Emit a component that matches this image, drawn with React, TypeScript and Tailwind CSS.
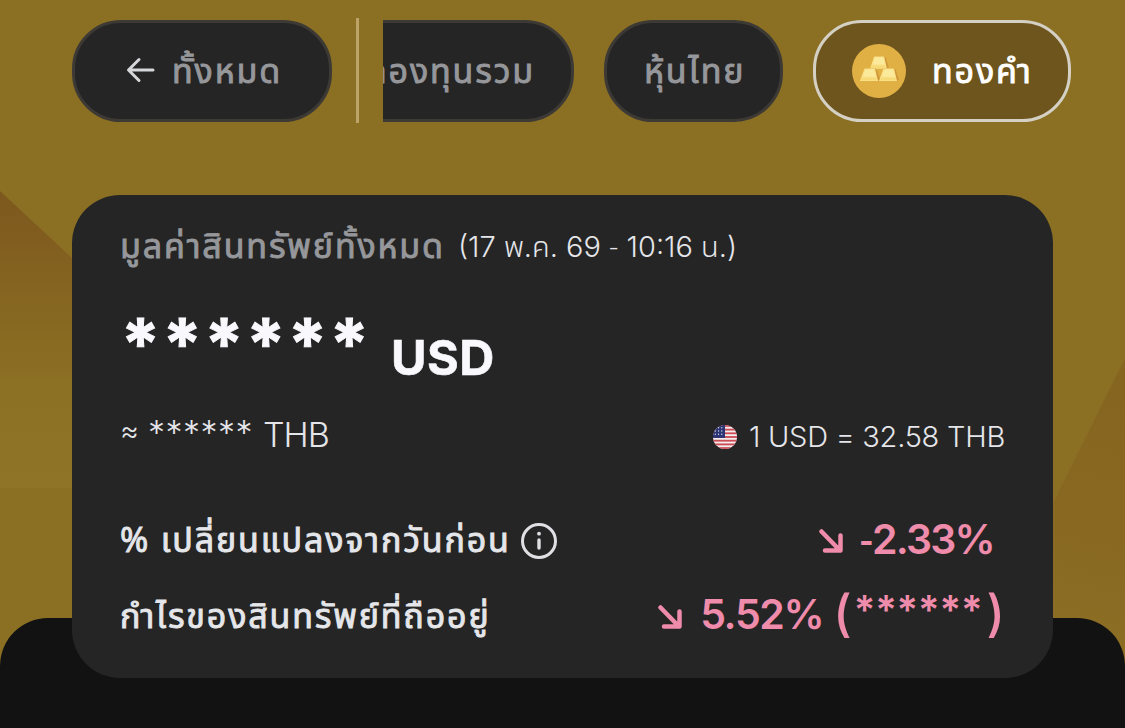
import React from "react";

const thai = "font-['Noto_Sans','Noto_Sans_Thai','Inter',sans-serif]";
const latin = "font-['Inter','Noto_Sans','Noto_Sans_Thai',sans-serif]";
const label = "whitespace-nowrap tracking-[1.85px] [-webkit-text-stroke:0.9px_currentColor]";

function BackArrow() {
  return (
    <svg className="h-[26px] w-[30px] shrink-0" viewBox="0 0 30 26" fill="none" stroke="#d6d7da" strokeWidth="3" strokeLinecap="round" strokeLinejoin="round">
      <path d="M27 13H3M13 2.500 2.500 13 13 23.500" />
    </svg>
  );
}

function DownArrow() {
  return (
    <svg className="h-6 w-6 shrink-0" viewBox="0 0 24 24" fill="none" stroke="#ef8bab" strokeWidth="4.500" strokeLinecap="round" strokeLinejoin="round">
      <path d="M2.500 2.500 21 21.500M21.500 6.500v15H6" />
    </svg>
  );
}

function InfoIcon() {
  return (
    <svg className="h-9 w-9 shrink-0" viewBox="0 0 36 36" fill="none" stroke="#e0e0e4">
      <circle cx="18" cy="18" r="16.500" strokeWidth="3" />
      <circle cx="18" cy="10.700" r="1.900" fill="#e0e0e4" stroke="none" />
      <path d="M18 17v8" strokeWidth="3.400" strokeLinecap="round" />
    </svg>
  );
}

function Ingot() {
  return (
    <>
      <path d="M4.500 0H15l1.800 1.200L20 11l-2.500 1.500H5z" fill="#cf9738" />
      <path d="M4.500 0H15l3 12.500H0z" fill="#fbe38c" />
      <path d="M5.500 1.200h8.500l1.400 6.800H3.500z" fill="#fbea9c" />
      <path d="M2 9h14.200l.8 2.800H.8z" fill="#f7da78" />
    </>
  );
}

function GoldIcon() {
  return (
    <svg className="h-[54px] w-[54px] shrink-0" viewBox="0 0 54 54">
      <circle cx="27" cy="27" r="27" fill="#e1b044" />
      <g transform="translate(18 12.500) scale(.94 .97)"><Ingot /></g>
      <g transform="translate(8 24.500)"><Ingot /></g>
      <g transform="translate(27 24.500)"><Ingot /></g>
    </svg>
  );
}

function Flag() {
  const stripes = [0, 2, 4, 6, 8, 10, 12];
  return (
    <svg className="h-6 w-6 shrink-0" viewBox="0 0 26 26">
      <defs><clipPath id="flag"><circle cx="13" cy="13" r="13" /></clipPath></defs>
      <g clipPath="url(#flag)">
        <rect width="26" height="26" fill="#f3eeee" />
        {stripes.map((i) => <rect key={i} y={i * 2} width="26" height="2" fill="#cc4b55" />)}
        <rect width="13" height="14" fill="#2b3474" />
        {[3, 6.5, 10].map((y) => [2.5, 6, 9.5].map((x) => <circle key={`${x}-${y}`} cx={x} cy={y} r=".7" fill="#d9dbea" />))}
      </g>
    </svg>
  );
}

const pill = "flex h-[102px] shrink-0 items-center rounded-[49px] border-[3px] border-[#3d3a35] bg-[#252525] text-[#96979b]";

export default function App() {
  return (
    <div className={`relative flex h-[728px] w-[1125px] flex-col overflow-hidden bg-[#8b7024] ${thai}`}>
      <svg className="absolute inset-0 h-full w-full" viewBox="0 0 1125 728">
        <defs>
          <linearGradient id="left" x1="0" y1="192" x2="0" y2="488" gradientUnits="userSpaceOnUse">
            <stop offset="0" stopColor="#7d581e" />
            <stop offset=".65" stopColor="#8c7023" />
            <stop offset="1" stopColor="#8f7427" />
          </linearGradient>
          <linearGradient id="right" x1="1125" y1="400" x2="1060" y2="618" gradientUnits="userSpaceOnUse">
            <stop offset="0" stopColor="#866520" />
            <stop offset=".6" stopColor="#896922" />
            <stop offset="1" stopColor="#8b6d24" />
          </linearGradient>
        </defs>
        <path d="M0 191 72 258 160 340V488H0Z" fill="url(#left)" />
        <path d="M1125 358 1053 503V728H1125Z" fill="url(#right)" />
      </svg>

      <header className="relative flex h-[195px] items-start pt-[18px] pl-[72px] text-[34px]">
        <div className={`${pill} mt-[2px] w-[260px] pb-[2px] pl-[51px]`}>
          <BackArrow />
          <span className={`${label} ml-[16px]`}>ทั้งหมด</span>
        </div>
        <div className="ml-6 h-[105px] w-[3px] shrink-0 bg-[#bca468]" />
        <div className="ml-6 flex w-[742px] gap-[30px] overflow-hidden pt-[2px]">
          <div className="flex w-[191px] shrink-0 justify-end overflow-hidden">
            <div className={`${pill} w-[260px] justify-end pr-[36px] pb-[2px]`}>
              <span className={label}>กองทุนรวม</span>
            </div>
          </div>
          <div className={`${pill} w-[179px] pb-[2px] pl-[37px]`}>
            <span className={label}>หุ้นไทย</span>
          </div>
          <div className="flex h-[102px] w-[258px] shrink-0 items-center rounded-[49px] border-[3px] border-[#d5d0c4] bg-[#6e551e] pb-px pl-9 text-white">
            <GoldIcon />
            <span className={`${label} ml-[26px]`}>ทองคำ</span>
          </div>
        </div>
      </header>

      <main className="relative z-10 mx-[72px] h-[483px] shrink-0 rounded-[48px] bg-[#252525] pr-[48px] pl-12 text-[#e5e6ea]">
        <div className="flex h-[102px] items-center">
          <h1 className={`${label} w-[338px] pb-px text-[34px] text-[#96979b]`}>มูลค่าสินทรัพย์ทั้งหมด</h1>
          <time className={`${latin} text-[29px] font-light whitespace-nowrap`}>(17 พ.ค. 69 <span className="font-['Open_Sans']">-</span> 10:16 น.)</time>
        </div>
        <div className={`${latin} flex h-[98px] items-center font-bold text-[#f8f8fd]`}>
          <span className="w-[271px] pb-[4px] pl-px text-[70px] leading-none tracking-[2.6px] whitespace-nowrap [-webkit-text-stroke:1px_currentColor]">******</span>
          <span className="pt-[24px] text-[48.500px] leading-none tracking-[0.5px] [-webkit-text-stroke:0.6px_currentColor]">USD</span>
        </div>
        <div className={`${latin} flex h-[80px] items-center justify-between font-light`}>
          <div className="flex items-center pb-[2px] text-[34px] whitespace-nowrap">
            <span className="w-[28px] pb-[7px] text-[29px]">≈</span>
            <span className="w-[115px] pb-[3px] tracking-[0.5px]">******</span>
            <span className="tracking-[-1px]">THB</span>
          </div>
          <div className="flex items-center gap-3 pt-[3px] text-[29px] whitespace-nowrap">
            <Flag />
            <span className="tracking-[-0.25px]">1 USD = 32.58 THB</span>
          </div>
        </div>
        <div className="flex h-[130px] items-center justify-between pr-[13px]">
          <div className="flex items-center gap-[10px] pt-px text-[34px]">
            <span className={`${label} -mt-[3px]`}>% เปลี่ยนแปลงจากวันก่อน</span>
            <InfoIcon />
          </div>
          <div className={`${latin} flex items-center gap-[17px] text-[41px] font-semibold whitespace-nowrap text-[#ef8bab]`}>
            <span className="pt-[2px]"><DownArrow /></span>
            <span className="-mr-[2px] pb-[2px] tracking-[-1.8px]"><span className="font-['Open_Sans'] tracking-[-1px]">-</span>2.33%</span>
          </div>
        </div>
        <div className="flex h-[20px] items-center justify-between">
          <span className={`${label} text-[34px]`}>กำไรของสินทรัพย์ที่ถืออยู่</span>
          <div className={`${latin} flex items-center text-[41px] font-semibold whitespace-nowrap text-[#ef8bab]`}>
            <span className="pt-[3px]"><DownArrow /></span>
            <span className="ml-[18px] w-[133px] tracking-[-1.4px]">5.52%</span>
            <span className="flex items-center">
              <span className="mr-[2px] pb-[4px] text-[50px] font-medium">(</span>
              <span className="-mt-[10px] text-[40px] tracking-[-0.1px]">******</span>
              <span className="ml-[4px] pb-[4px] text-[50px] font-medium">)</span>
            </span>
          </div>
        </div>
      </main>
      <div className="relative -mt-[60px] h-[110px] shrink-0 rounded-t-[48px] bg-[#121212]" />
    </div>
  );
}
